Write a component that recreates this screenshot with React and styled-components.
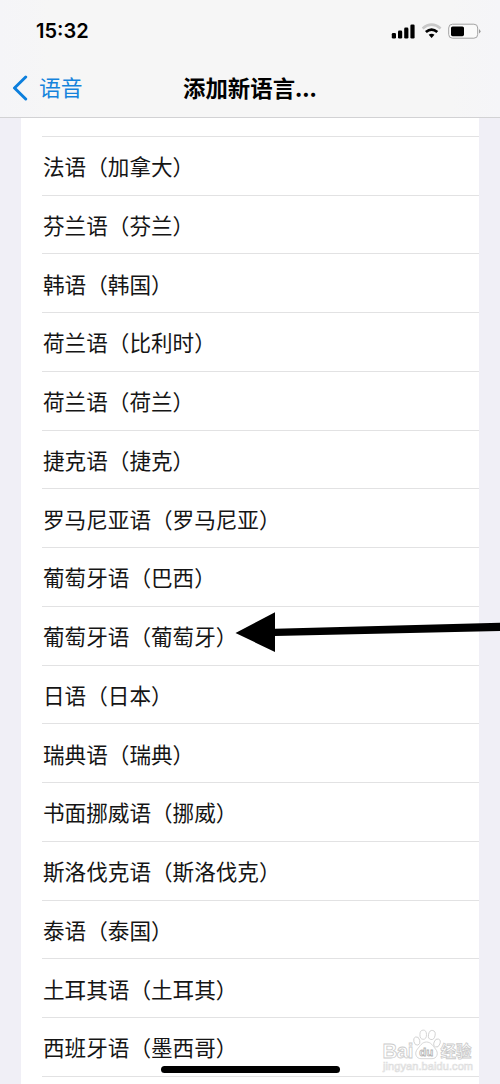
import styled, { createGlobalStyle } from "styled-components";

const languages = [
  "法语（法国）",
  "法语（加拿大）",
  "芬兰语（芬兰）",
  "韩语（韩国）",
  "荷兰语（比利时）",
  "荷兰语（荷兰）",
  "捷克语（捷克）",
  "罗马尼亚语（罗马尼亚）",
  "葡萄牙语（巴西）",
  "葡萄牙语（葡萄牙）",
  "日语（日本）",
  "瑞典语（瑞典）",
  "书面挪威语（挪威）",
  "斯洛伐克语（斯洛伐克）",
  "泰语（泰国）",
  "土耳其语（土耳其）",
  "西班牙语（墨西哥）",
];

const GlobalStyle = createGlobalStyle`
  * {
    box-sizing: border-box;
  }

  body {
    margin: 0;
    background: #f0eff6;
    font-family: "Liberation Sans", "Noto Sans CJK SC", sans-serif;
  }
`;

const Screen = styled.div`
  position: relative;
  display: flex;
  flex-direction: column;
  width: 500px;
  height: 1084px;
  overflow: hidden;
  background: #f0eff6;
`;

const Header = styled.header`
  flex: none;
  height: 118px;
  background: linear-gradient(90deg, #f5f5f8 0, #f6f6f6 50px, #f6f6f6 450px, #f5f5f8 100%);
  border-bottom: 1px solid #d2d2d4;
`;

const StatusBar = styled.div`
  display: flex;
  align-items: center;
  justify-content: space-between;
  height: 61px;
  padding: 0 19px 0 36px;
`;

const Time = styled.span`
  color: #000;
  font-family: Inter, "Liberation Sans", sans-serif;
  font-size: 20px;
  font-weight: 600;
`;

const NavBar = styled.nav`
  display: grid;
  grid-template-columns: 1fr auto 1fr;
  align-items: center;
  height: 52px;
`;

const BackButton = styled.button`
  display: flex;
  align-items: center;
  gap: 11px;
  padding: 0 0 0 12px;
  border: 0;
  background: none;
  color: #1583dc;
  font-family: "Noto Sans CJK SC", sans-serif;
  font-size: 21.8px;
  line-height: 32px;
`;

const BackIcon = styled.svg`
  margin-top: 2px;
`;

const Title = styled.h1`
  margin: 0;
  color: #000;
  font-family: "Noto Sans CJK SC", sans-serif;
  font-size: 22.4px;
  font-weight: 700;
  line-height: 32px;
`;

const ListArea = styled.main`
  flex: 1;
  min-height: 0;
  margin: 0 21px;
  overflow: hidden;
  background: #fff;
`;

// the list is scrolled, so the first row sits mostly under the header
const List = styled.ul`
  margin: -40px 0 0;
  padding: 0 0 0 21px;
  list-style: none;
`;

const Language = styled.li`
  display: flex;
  align-items: center;
  height: 58.75px;
  padding: 1px 0 0 1px;
  border-bottom: 1px solid #e2e2e3;
  color: #151515;
  font-family: "Noto Sans CJK SC", sans-serif;
  font-size: 21.6px;
  line-height: 32px;
  white-space: nowrap;

  &:first-child {
    padding: 0 0 1px 1px;
    color: #888;
  }
`;

const Arrow = styled.svg`
  position: absolute;
  top: 605px;
  left: 230px;
`;

const HomeIndicator = styled.div`
  position: absolute;
  bottom: 11px;
  left: 161px;
  width: 179px;
  height: 7px;
  border-radius: 4px;
  background: #000;
`;

const Watermark = styled.svg`
  position: absolute;
  top: 1022px;
  left: 378px;
`;

const StatusIcons = () => (
  <svg width="90" height="20" viewBox="0 0 90 20">
    <rect x="0.8" y="12" width="4.2" height="5.5" rx="1.3" />
    <rect x="7" y="9.6" width="4.2" height="7.9" rx="1.3" />
    <rect x="13.2" y="6.6" width="4.2" height="10.9" rx="1.3" />
    <rect x="19.4" y="3.4" width="4.2" height="14.1" rx="1.3" />
    <path d="M31.6 7.5Q40.6 -0.1 49.6 7.5" fill="none" stroke="#c8c8c8" strokeWidth="2.6" />
    <path d="M34.9 11Q40.6 6.2 46.3 11" fill="none" stroke="#000" strokeWidth="2.8" />
    <path d="M37.7 13.8Q40.6 11.6 43.5 13.8L40.6 17Z" />
    <rect x="57.7" y="3.2" width="29" height="14" rx="3.8" fill="#fafafa" stroke="#a3a3a3" />
    <rect x="60" y="5.4" width="13" height="9.8" rx="1.6" />
    <path d="M88 7.9Q91 10.2 88 12.5Z" fill="#999" />
  </svg>
);

const App = () => {
  return (
    <>
      <GlobalStyle />
      <Screen>
        <Header>
          <StatusBar>
            <Time>15:32</Time>
            <StatusIcons />
          </StatusBar>
          <NavBar>
            <BackButton>
              <BackIcon width="16" height="26" viewBox="0 0 16 26">
                <path d="M13.7 2L2.5 13L13.7 24" fill="none" stroke="#0c7fdd" strokeWidth="3" strokeLinecap="round" strokeLinejoin="round" />
              </BackIcon>
              语音
            </BackButton>
            <Title>添加新语言...</Title>
          </NavBar>
        </Header>
        <ListArea>
          <List>
            {languages.map((language) => (
              <Language key={language}>{language}</Language>
            ))}
          </List>
        </ListArea>
        <Arrow width="270" height="60" viewBox="0 0 270 60">
          <path d="M5.5 28L45 7.2V23.8L270 17.8V26L45 31V47Z" />
        </Arrow>
        <Watermark width="100" height="54" viewBox="0 0 100 54">
          <g fill="#fff" stroke="#cbcbcb" strokeWidth="0.8">
            <ellipse cx="38.8" cy="19" rx="3" ry="4.2" transform="rotate(-15 38.8 19)" />
            <ellipse cx="45.2" cy="12.7" rx="3.3" ry="4.6" />
            <ellipse cx="53.8" cy="13" rx="3.3" ry="4.6" transform="rotate(12 53.8 13)" />
            <ellipse cx="59" cy="21" rx="3" ry="4.2" transform="rotate(20 59 21)" />
            <path d="M48.5 20C53 20 55 24 57.5 27C61 31 59 36.7 54 36.7H43C38 36.7 36 31 39.5 27C42 24 44 20 48.5 20Z" />
            <text x="4.5" y="36" fontFamily="Liberation Sans" fontSize="20.5" fontWeight="700" textLength="31">Bai</text>
            <text x="62.5" y="35" fontFamily="Noto Sans CJK SC" fontSize="15.5" fontWeight="700">经验</text>
          </g>
          <text x="41.3" y="34.3" fill="#fff" stroke="#b4b4b4" strokeWidth="0.8" fontFamily="Liberation Sans" fontSize="11.5" fontWeight="700">du</text>
          <text x="5" y="47.5" fill="#fff" stroke="#dedede" strokeWidth="0.7" fontFamily="Liberation Sans" fontSize="11" textLength="90">jingyan.baidu.com</text>
        </Watermark>
        <HomeIndicator />
      </Screen>
    </>
  );
};

export default App;
